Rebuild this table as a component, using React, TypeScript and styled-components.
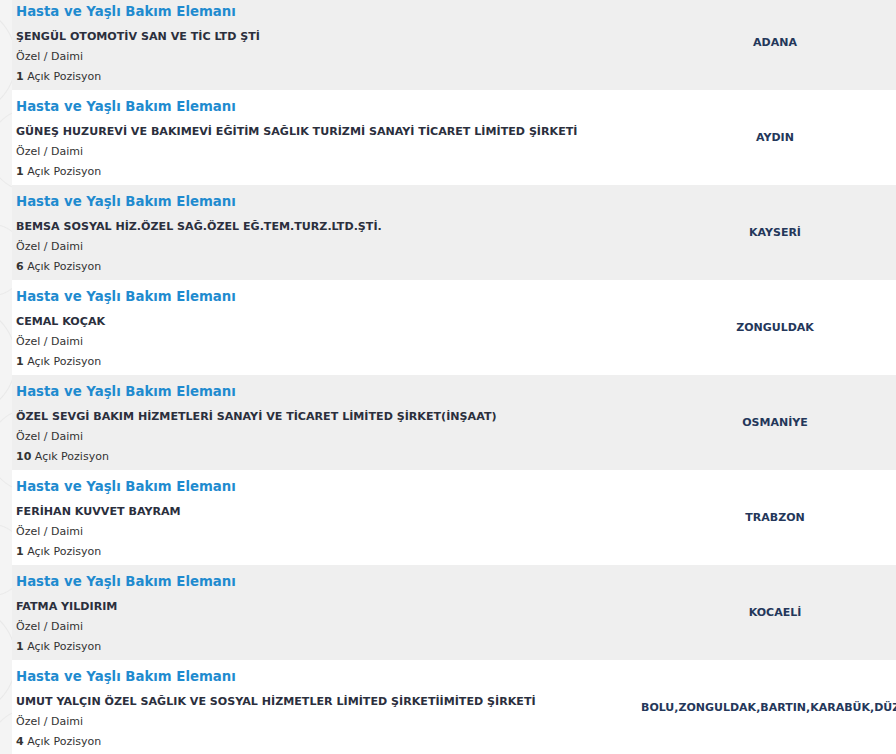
import styled, { createGlobalStyle } from "styled-components";

const GlobalStyle = createGlobalStyle`
  html, body {
    margin: 0;
    padding: 0;
    overflow: hidden;
  }
  body {
    background-color: #f4f4f4;
    background-image:
      radial-gradient(circle at -40px 60px, transparent 55px, rgba(205, 205, 205, 0.3) 56px, transparent 57px),
      radial-gradient(circle at 30px 150px, transparent 40px, rgba(205, 205, 205, 0.25) 41px, transparent 42px),
      radial-gradient(circle at -10px 260px, transparent 35px, rgba(205, 205, 205, 0.25) 36px, transparent 37px);
    background-size: 60px 300px;
    background-repeat: repeat-y;
    font-family: "DejaVu Sans", Verdana, sans-serif;
  }
`;

const Page = styled.main`
  width: 910px;
  margin-top: -5px;
  padding-left: 12px;
`;

const Row = styled.div<{ $shaded: boolean }>`
  display: grid;
  grid-template-columns: 629px 268px;
  height: 95px;
  background: ${(p) => (p.$shaded ? "#efefef" : "#ffffff")};
`;

const Info = styled.div`
  padding: 6px 4px 0;
  display: flex;
  flex-direction: column;
`;

const Title = styled.a`
  font-size: 13.3px;
  font-weight: 700;
  line-height: 22px;
  color: #1f8bcf;
  text-decoration: none;
`;

const Company = styled.div`
  margin-top: 4px;
  font-size: 11.1px;
  font-weight: 700;
  line-height: 20px;
  color: #2b2f3d;
  white-space: nowrap;
`;

const Meta = styled.div`
  font-size: 11px;
  line-height: 20px;
  color: #333333;

  b {
    font-weight: 700;
  }
`;

const City = styled.div`
  display: flex;
  align-items: center;
  justify-content: center;
  font-size: 11px;
  font-weight: 700;
  color: #24375a;
  white-space: nowrap;
`;

const CityText = styled.span`
  max-width: 100%;
`;

type Job = { company: string; city: string; count: number };

const jobs: Job[] = [
  { company: "ŞENGÜL OTOMOTİV SAN VE TİC LTD ŞTİ", city: "ADANA", count: 1 },
  {
    company: "GÜNEŞ HUZUREVİ VE BAKIMEVİ EĞİTİM SAĞLIK TURİZMİ SANAYİ TİCARET LİMİTED ŞİRKETİ",
    city: "AYDIN",
    count: 1,
  },
  { company: "BEMSA SOSYAL HİZ.ÖZEL SAĞ.ÖZEL EĞ.TEM.TURZ.LTD.ŞTİ.", city: "KAYSERİ", count: 6 },
  { company: "CEMAL KOÇAK", city: "ZONGULDAK", count: 1 },
  {
    company: "ÖZEL SEVGİ BAKIM HİZMETLERİ SANAYİ VE TİCARET LİMİTED ŞİRKET(İNŞAAT)",
    city: "OSMANİYE",
    count: 10,
  },
  { company: "FERİHAN KUVVET BAYRAM", city: "TRABZON", count: 1 },
  { company: "FATMA YILDIRIM", city: "KOCAELİ", count: 1 },
  {
    company: "UMUT YALÇIN ÖZEL SAĞLIK VE SOSYAL HİZMETLER LİMİTED ŞİRKETİİMİTED ŞİRKETİ",
    city: "BOLU,ZONGULDAK,BARTIN,KARABÜK,DÜZCE",
    count: 4,
  },
];

const App = () => {
  return (
    <>
      <GlobalStyle />
      <Page>
        {jobs.map((job, i) => (
          <Row key={i} $shaded={i % 2 === 0}>
            <Info>
              <Title href="#">Hasta ve Yaşlı Bakım Elemanı</Title>
              <Company>{job.company}</Company>
              <Meta>Özel / Daimi</Meta>
              <Meta>
                <b>{job.count}</b> Açık Pozisyon
              </Meta>
            </Info>
            <City>
              <CityText>{job.city}</CityText>
            </City>
          </Row>
        ))}
      </Page>
    </>
  );
};

export default App;
